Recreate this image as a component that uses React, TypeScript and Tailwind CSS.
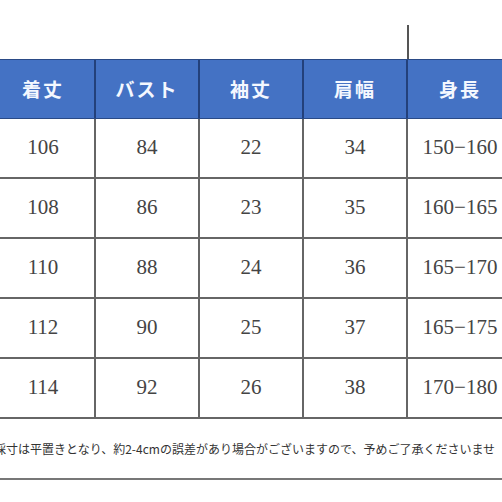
import React from "react";

const headers = ["着丈", "バスト", "袖丈", "肩幅", "身長"];
const rows = [
  ["106", "84", "22", "34", "150−160"],
  ["108", "86", "23", "35", "160−165"],
  ["110", "88", "24", "36", "165−170"],
  ["112", "90", "25", "37", "165−175"],
  ["114", "92", "26", "38", "170−180"],
];

export default function App() {
  return (
    <div className="w-[502px] h-[502px] overflow-hidden bg-white relative">
      <div className="h-[59px] pt-[25px]">
        <div className="ml-[407px] w-[2px] h-[34px] bg-[#555]" />
      </div>
      <div className="ml-[-8px] w-[520px]">
        <div className="grid grid-cols-[104px_104px_104px_104px_104px] h-[60px] bg-[#4472c4] border-y border-[#2a4a86]">
          {headers.map((h, i) => (
            <div
              key={h}
              className={`flex items-center justify-center text-[#f4f8ff] font-bold text-[19px] tracking-[2px] ${i < 4 ? "border-r-[2px] border-[#23407a]" : ""}`}
              style={{ fontFamily: '"Noto Sans CJK JP", sans-serif' }}
            >
              {h}
            </div>
          ))}
        </div>
        {rows.map((r, ri) => (
          <div
            key={ri}
            className="grid grid-cols-[104px_104px_104px_104px_104px] h-[60px] border-b-[2px] border-[#666]"
          >
            {r.map((c, ci) => (
              <div
                key={ci}
                className={`flex items-center justify-center text-[21px] text-[#444] ${ci < 4 ? "border-r-[2px] border-[#666]" : ""}`}
                style={{ fontFamily: '"Liberation Serif", serif' }}
              >
                {c}
              </div>
            ))}
          </div>
        ))}
        <div className="h-[61px] border-b-[2px] border-[#777] flex items-center justify-start overflow-hidden pl-[2px]">
          <span
            className="whitespace-nowrap text-[12px] text-[#333]"
            style={{ fontFamily: '"Noto Sans CJK JP", sans-serif' }}
          >
            採寸は平置きとなり、約2-4cmの誤差があり場合がございますので、予めご了承くださいませ
          </span>
        </div>
      </div>
    </div>
  );
}
